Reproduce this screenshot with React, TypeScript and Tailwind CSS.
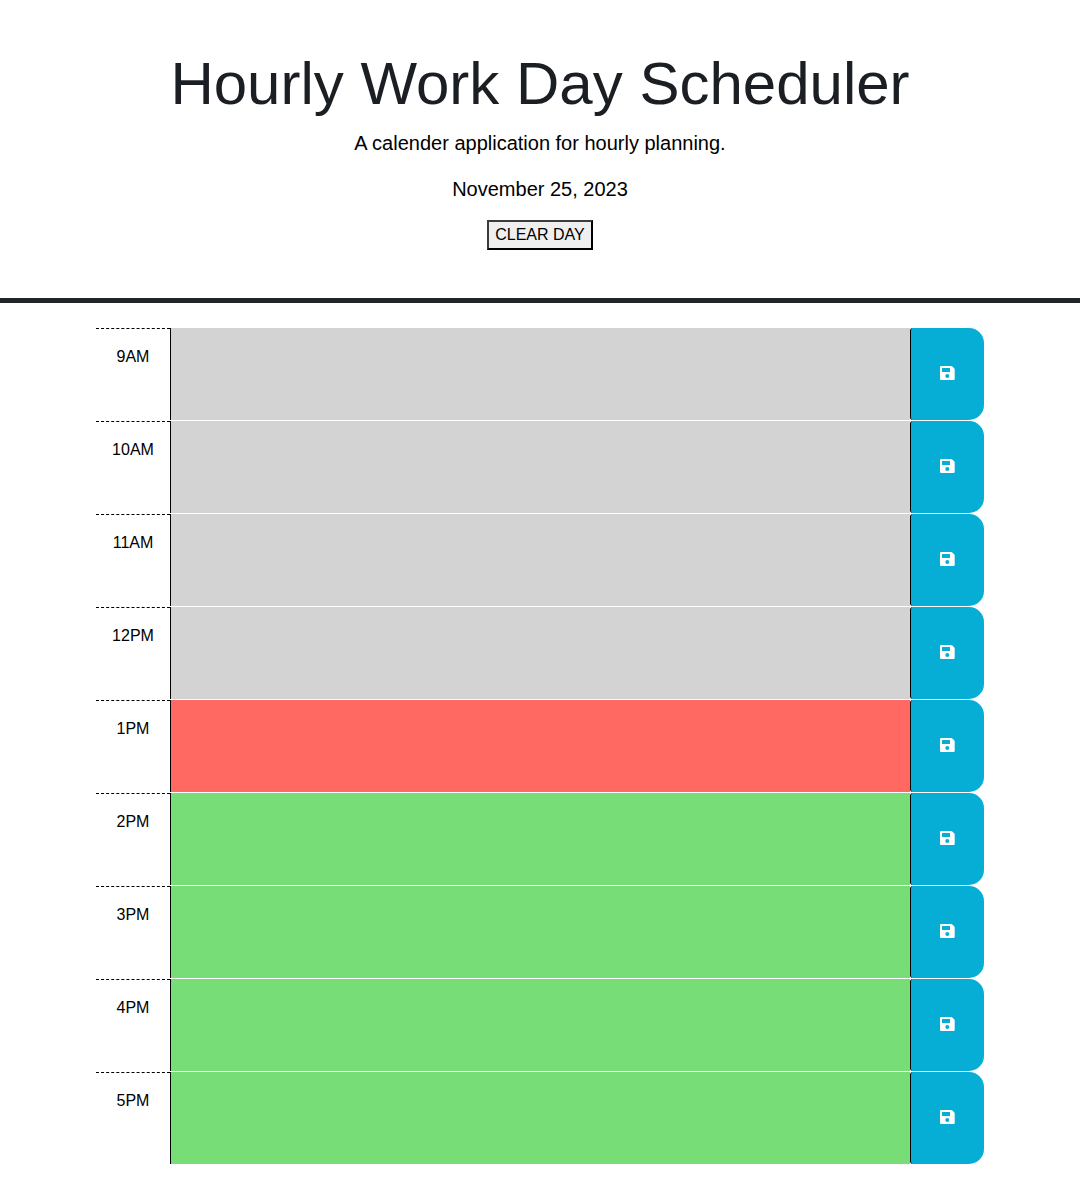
const hours = [
  { label: "9AM", tone: "bg-[#d3d3d3]" },
  { label: "10AM", tone: "bg-[#d3d3d3]" },
  { label: "11AM", tone: "bg-[#d3d3d3]" },
  { label: "12PM", tone: "bg-[#d3d3d3]" },
  { label: "1PM", tone: "bg-[#ff6961]" },
  { label: "2PM", tone: "bg-[#77dd77]" },
  { label: "3PM", tone: "bg-[#77dd77]" },
  { label: "4PM", tone: "bg-[#77dd77]" },
  { label: "5PM", tone: "bg-[#77dd77]" },
];

function SaveIcon() {
  return (
    <svg viewBox="0 0 15 14" className="mr-px mb-0.5 h-[14px] w-[15px]" fill="currentColor" aria-hidden="true">
      <path fillRule="evenodd" d="M1.2 0H11.3Q11.9 0 12.3.4L14.3 2.400Q14.700 2.800 14.700 3.400V12.800Q14.700 14 13.500 14H1.200Q0 14 0 12.800V1.200Q0 0 1.200 0ZM2.300 2Q2 2 2 2.300V5.700Q2 6 2.300 6H9.700Q10 6 10 5.700V2.300Q10 2 9.700 2ZM7.300 8a2 2 0 1 0 0 4a2 2 0 1 0 0-4Z" />
    </svg>
  );
}

export default function App() {
  return (
    <div className="min-h-[1184px] bg-white font-['Liberation_Sans',Arial,sans-serif] text-base leading-6 text-black">
      <header className="flex h-[303px] flex-col items-center border-b-[5px] border-[#212529] pt-12 text-center">
        <h1 className="mb-2 text-[60px] leading-[72px] text-[#1b1f23]">Hourly Work Day Scheduler</h1>
        <p className="mb-4 text-xl leading-[30px]">A calender application for hourly planning.</p>
        <p className="mb-4 text-xl leading-[30px]">November 25, 2023</p>
        <button className="h-[30px] w-[106px] border-2 border-t-[#3c3c3c] border-r-black border-b-black border-l-[#3c3c3c] bg-[#efefef]">CLEAR DAY</button>
      </header>
      <main className="mx-24 mt-[25px]">
        {hours.map(({ label, tone }) => (
          <div key={label} className="mb-px flex h-[92px]">
            <div className="w-[74px] border-t border-dashed border-black pt-4 text-center">{label}</div>
            <textarea aria-label={label} className={`block flex-1 resize-none border-l border-black outline-none ${tone}`} />
            <button aria-label="Save" className="flex w-[74px] items-center justify-center rounded-l-[3px] rounded-r-[15px] border-l border-black bg-[#06aed5] text-white">
              <SaveIcon />
            </button>
          </div>
        ))}
      </main>
    </div>
  );
}
